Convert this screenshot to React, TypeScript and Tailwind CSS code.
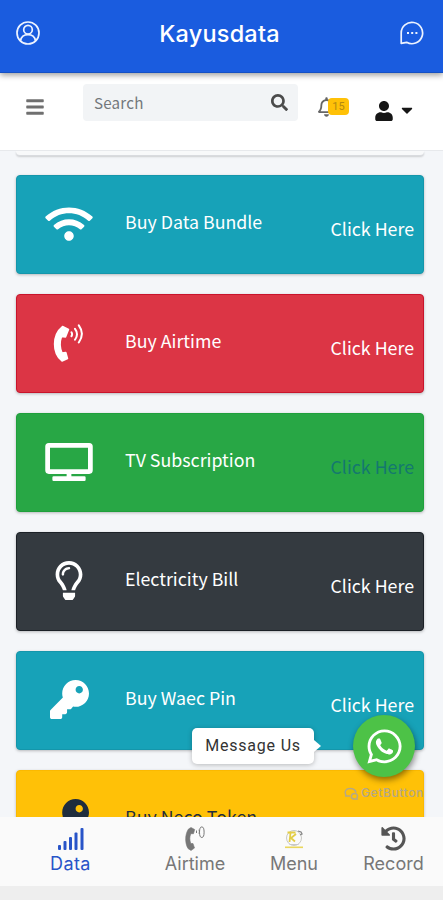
import React from "react";
import {
  FaBars,
  FaCaretDown,
  FaHistory,
  FaKey,
  FaRegBell,
  FaRegLightbulb,
  FaSearch,
  FaTv,
  FaUser,
  FaWhatsapp,
  FaWifi,
} from "react-icons/fa";

type Service = {
  title: string;
  icon: React.ReactNode;
  card: string;
  link?: string;
};

function PhoneWavesIcon() {
  return (
    <svg viewBox="0 0 32 40" className="h-[40px] w-[32px]" fill="none" stroke="currentColor" strokeLinecap="round">
      <path
        d="M9.500 3.500C-1 12 -1 30 9 38L14.500 35.500 12.800 29.500 9 30C6.500 24 6.500 19 8.500 13.500L12.500 14 15.500 6.500Z"
        fill="currentColor"
        strokeWidth="1.500"
        strokeLinejoin="round"
      />
      <path d="M18.500 9.300q1.200 1.900 0 3.800M22 5.800q4 5.200 0 11M25.800 2.300q6.200 8.500 0 17.200" strokeWidth="2" />
    </svg>
  );
}

const services: Service[] = [
  {
    title: "Buy Data Bundle",
    icon: <FaWifi className="h-[38px] w-[48px]" />,
    card: "bg-[#17a2b8] text-white border-[#1496ab]",
    link: "text-white",
  },
  {
    title: "Buy Airtime",
    icon: <PhoneWavesIcon />,
    card: "bg-[#dc3545] text-white border-[#c9142c]",
    link: "text-white",
  },
  {
    title: "TV Subscription",
    icon: <FaTv className="h-[38px] w-[48px]" />,
    card: "bg-[#28a745] text-white border-[#1fa03c]",
    link: "text-[#14786f]",
  },
  {
    title: "Electricity Bill",
    icon: <FaRegLightbulb className="h-[39px] w-[28px]" />,
    card: "bg-[#343a40] text-white border-[#1c2127]",
    link: "text-white",
  },
  {
    title: "Buy Waec Pin",
    icon: <FaKey className="h-[39px] w-[39px]" />,
    card: "bg-[#17a2b8] text-white border-[#1496ab]",
    link: "text-white",
  },
  {
    title: "Buy Neco Token",
    icon: <FaKey className="h-[39px] w-[39px]" />,
    card: "bg-[#ffc107] text-[#1f2d3d] border-[#fbb900]",
  },
];

function ProfileIcon() {
  return (
    <svg viewBox="0 0 24 24" className="h-6 w-6" fill="none" stroke="currentColor" strokeWidth="1.700">
      <circle cx="12" cy="12" r="11" />
      <circle cx="12" cy="8.700" r="4.300" />
      <path d="M4.500 19.800c.7-4 3.300-6.200 7.500-6.200s6.800 2.200 7.500 6.200" />
    </svg>
  );
}

function ChatIcon() {
  return (
    <svg viewBox="0 0 24 24" className="h-6 w-6" fill="none" stroke="currentColor" strokeWidth="1.700">
      <path d="M1.200 22.300V12A10.700 10.700 0 1 1 6.600 21.300Z" strokeLinejoin="round" />
      <path d="M7 12h2M11.200 12h2M15.400 12h2" strokeWidth="2" />
    </svg>
  );
}

function SignalIcon() {
  return (
    <svg viewBox="0 0 27 24" className="h-6 w-[27px]" fill="currentColor">
      <rect x="1" y="18" width="3" height="5" rx="1" />
      <rect x="6.500" y="14" width="3" height="9" rx="1" />
      <rect x="12" y="10" width="3" height="13" rx="1" />
      <rect x="17.500" y="5.500" width="3" height="17.500" rx="1" />
      <rect x="23.500" y="1" width="3" height="22" rx="1" />
    </svg>
  );
}

function CallIcon() {
  return (
    <svg viewBox="0 0 20 25" className="h-[25px] w-5" fill="none" stroke="currentColor">
      <path
        d="M6 1.500 3.500 3C-.2 8.500-.2 17 3 22.500L6 24.500l3.500-2.500-1.500-4.500H5.800c-1.300-3.500-1.300-6.500 0-9.800H8.500l1.200-4.200Z"
        fill="currentColor"
        strokeWidth=".6"
        strokeLinejoin="round"
      />
      <path d="M11.500 4.500v2.500M13.800 3.800c.8 1.200.8 2.400 0 3.600" />
      <ellipse cx="16.800" cy="6.200" rx="2.300" ry="5.300" />
    </svg>
  );
}

function EmblemIcon() {
  return (
    <svg viewBox="0 0 20 20" className="h-5 w-5" fill="none">
      <circle cx="10" cy="9" r="7.500" stroke="#c9c9c4" strokeWidth="1" />
      <path d="M3.500 3.500h8M6.500 4 5.500 13M12 5 7 9l4 3.500" stroke="#e3cd45" strokeWidth="1.800" />
      <path d="m14 2 3 1 1 2-2 1" stroke="#858585" strokeWidth="1.300" />
      <path d="M5.500 15.500h9" stroke="#c8c8c8" />
      <path d="M1 18.300h18" stroke="#ead75c" strokeWidth="1.600" />
    </svg>
  );
}

function ServiceCard({ item }: { item: Service }) {
  return (
    <article
      className={`flex h-[99px] shrink-0 rounded-[4px] border shadow-[0_1px_3px_rgba(0,0,0,0.25)] ${item.card}`}
    >
      <div className="flex w-[104px] shrink-0 items-center justify-center pb-[2px]">{item.icon}</div>
      <h2 className="flex-1 pt-[31px] pl-[4px] text-[17.800px] leading-[28px] whitespace-nowrap">{item.title}</h2>
      {item.link && (
        <span className={`pt-[38px] pr-[9px] text-[17.800px] leading-[28px] whitespace-nowrap ${item.link}`}>
          Click Here
        </span>
      )}
    </article>
  );
}

export default function App() {
  return (
    <div className="relative flex h-[900px] w-[443px] flex-col overflow-hidden bg-[#f4f6f9] font-['Noto_Sans_CJK_SC',sans-serif]">
      <header className="relative z-20 flex h-[73px] shrink-0 items-start justify-between border-b border-[#1450c4] bg-[#1a5cdf] pr-[19px] pl-4 pt-[21px] text-[#edf3ff] shadow-[0_2px_6px_rgba(0,0,0,0.4)]">
        <ProfileIcon />
        <h1 className="pt-px pr-px font-['Inter',sans-serif] text-[23.500px] leading-6 font-medium tracking-[0.2px] text-white">
          Kayusdata
        </h1>
        <ChatIcon />
      </header>

      <nav className="relative z-10 flex h-[78px] shrink-0 items-start border-b border-[#e7e9ec] bg-white pt-[11px]">
        <FaBars className="mt-[13px] ml-[26px] h-[20px] w-[18px] text-[#707070]" />
        <div className="ml-[39px] flex h-[37px] w-[215px] items-center justify-between rounded-[4px] bg-[#f2f4f6] pr-[10px] pl-[11px]">
          <span className="-mt-px text-[15.200px] leading-5 tracking-[0.2px] text-[#73787c]">Search</span>
          <FaSearch className="-mt-px h-[17px] w-[17px] text-[#4b4b4b]" />
        </div>
        <div className="mt-[13px] ml-[20px] flex w-[32px] items-start">
          <FaRegBell className="h-[20px] w-[17px] shrink-0 text-[#666]" />
          <span className="z-10 mt-[1px] -ml-[7px] h-[17px] w-[21px] shrink-0 rounded-[4px] bg-[#ffc107] text-center font-['Roboto',sans-serif] text-[11px] leading-[17px] text-[#b58a10]">
            15
          </span>
        </div>
        <FaUser className="mt-[17px] ml-[25px] h-[20px] w-[18px] text-[#161616]" />
        <FaCaretDown className="mt-[17px] ml-[7px] h-[18px] w-[14px] text-[#161616]" />
      </nav>

      <main className="flex h-[666px] shrink-0 flex-col gap-5 overflow-hidden pr-[19px] pl-4">
        <div className="-mb-[1px] h-[5px] shrink-0 rounded-b-[4px] border-b border-[#d9dbdf] bg-[#f8f9fa] shadow-[0_1px_2px_rgba(0,0,0,0.16)]" />
        {services.map((item) => (
          <ServiceCard key={item.title} item={item} />
        ))}
      </main>

      <footer className="relative z-20 flex h-[69px] shrink-0 bg-[#fafafa] font-['Inter',sans-serif] text-[18px] leading-5 text-[#777777]">
        <div className="flex w-[141px] shrink-0 flex-col items-center pt-[10px] text-[#2854c8]">
          <SignalIcon />
          <span className="mt-[3px] tracking-[0.400px]">Data</span>
        </div>
        <div className="flex w-[108px] shrink-0 flex-col items-center pt-[9px]">
          <CallIcon />
          <span className="mt-[3px]">Airtime</span>
        </div>
        <div className="flex w-[90px] shrink-0 flex-col items-center pt-[12px]">
          <EmblemIcon />
          <span className="mt-[5px]">Menu</span>
        </div>
        <div className="flex w-[109px] shrink-0 flex-col items-center pt-[9px]">
          <FaHistory className="h-[25px] w-[25px] text-[#555]" />
          <span className="mt-[3px]">Record</span>
        </div>
      </footer>
      <div className="h-[14px] shrink-0 bg-[#eeeeee]" />

      <div className="absolute top-[728px] left-[192px] z-10 flex items-center">
        <div className="flex h-[36px] w-[122px] items-center justify-center rounded-[5px] bg-white font-['Roboto',sans-serif] text-[16px] tracking-[0.800px] whitespace-nowrap text-[#333] shadow-[0_1px_5px_rgba(0,0,0,0.25)]">
          Message Us
        </div>
        <div className="h-0 w-0 border-y-[6px] border-l-[7px] border-y-transparent border-l-white" />
      </div>
      <div className="absolute top-[715px] left-[353px] z-10 flex h-[62px] w-[62px] items-center justify-center rounded-full bg-[#4dc247] text-white shadow-[1px_3px_6px_rgba(0,0,0,0.45)]">
        <FaWhatsapp className="h-[39px] w-[39px]" />
      </div>
      <div className="absolute top-[785px] left-[344px] z-10 flex items-center gap-[2px] text-[#b4a888]">
        <svg viewBox="0 0 15 13" className="h-[13px] w-[15px]" fill="none" stroke="currentColor" strokeWidth="1.500">
          <path d="M2 8.500C0 4 2 1.500 6 1.500c3.500 0 5.500 1.500 6 4M1 9h5" />
          <path d="M14 12H9.500C6 11 7 6.500 10.500 6.500c3 0 4 3 2 4.500" />
        </svg>
        <span className="font-['Inter',sans-serif] text-[12px] leading-4 font-medium tracking-[0.600px]">GetButton</span>
      </div>
    </div>
  );
}
